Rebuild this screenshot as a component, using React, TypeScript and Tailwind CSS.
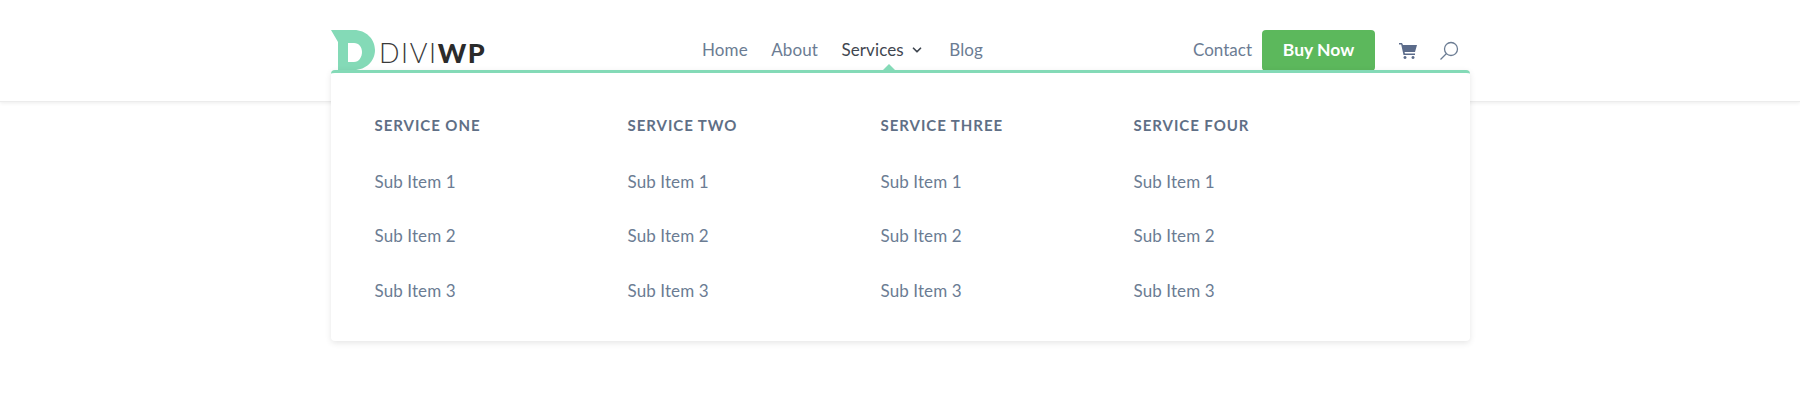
import { ChevronDown } from "lucide-react";

const columns = ["Service One", "Service Two", "Service Three", "Service Four"];
const subItems = ["Sub Item 1", "Sub Item 2", "Sub Item 3"];

function Logo() {
  return (
    <div className="flex w-[371px] shrink-0 items-start">
      <svg width="45" height="40" viewBox="0 0 45 40">
        <path
          fill="#84dab7"
          fillRule="evenodd"
          d="M0 0H23C35 0 44 9 44 20C44 31 35 40 23 40H7V12ZM17 13V32H23C28 32 31 27 31 22C31 17 28 13 23 13Z"
        />
      </svg>
      <div className="ml-[3px] mt-[8px] text-[27px] leading-[30px] tracking-[1.6px] text-[#3a3a3a] font-light">
        DIVI<span className="font-black tracking-[1.6px] text-[#2b2b2b]">WP</span>
      </div>
    </div>
  );
}

function NavLink({ label, active }: { label: string; active?: boolean }) {
  return <a className={active ? "text-[#3f4650]" : "text-[#6b7c93]"}>{label}</a>;
}

export default function App() {
  return (
    <div className="h-[405px] bg-white font-['Lato','Noto_Sans',sans-serif]">
      <header className="h-[102px] border-b border-[#ececec] shadow-[0_1px_4px_rgba(0,0,0,0.08)]">
        <div className="relative ml-[331px] h-full w-[1139px]">
          <div className="flex items-start pt-[30px]">
            <Logo />
            <nav className="mt-[9px] flex items-center text-[17px] leading-[22px] tracking-[0.1px]">
              <NavLink label="Home" />
              <span className="ml-[23.5px]">
                <NavLink label="About" />
              </span>
              <div className="ml-[23.5px] flex items-center gap-[6px]">
                <NavLink label="Services" active />
                <ChevronDown size={14} strokeWidth={3} className="text-[#3f4650]" />
              </div>
              <span className="ml-[25.5px]">
                <NavLink label="Blog" />
              </span>
            </nav>
            <div className="ml-auto flex items-center text-[17px]">
              <a className="mb-[2px] mr-[10px] text-[#6b7c93]">Contact</a>
              <a className="flex h-[41px] w-[113px] items-center justify-center rounded-[4px] bg-[#5cb85c] text-[17.5px] font-bold text-white">
                Buy Now
              </a>
              <svg width="18" height="16" viewBox="0 0 18 16" className="ml-[24px]">
                <path
                  fill="#5b6b8a"
                  d="M0 0H3L4 2H18L16 9H5.5L6 10.5H16V12H4.5L2.2 1.5H0ZM6 13a1.5 1.5 0 1 0 .01 0ZM14 13a1.5 1.5 0 1 0 .01 0Z"
                />
              </svg>
              <svg width="20" height="20" viewBox="0 0 20 20" fill="none" stroke="#6b7c93" strokeWidth="1.3" className="ml-[22px] mr-[11px]">
                <circle cx="12" cy="8" r="6.5" />
                <path d="M7.5 12.5L1.5 18.5" />
              </svg>
            </div>
          </div>

          <div className="absolute left-0 right-0 top-[70px] z-10 h-[271px] rounded-[4px] border-t-[3px] border-[#84dab7] bg-white pl-[43.5px] pt-[40px] shadow-[0_2px_6px_rgba(0,0,0,0.1)]">
            <span className="absolute left-[552px] top-[-9px] h-0 w-0 border-x-[6px] border-b-[6px] border-x-transparent border-b-[#84dab7]" />
            <div className="grid grid-cols-[253px_253px_253px_253px]">
              {columns.map((title) => (
                <div key={title}>
                  <h4 className="h-[24px] text-[15px] leading-[24px] font-bold uppercase tracking-[0.95px] text-[#5f6f86]">
                    {title}
                  </h4>
                  <ul className="mt-[32.6px] flex flex-col gap-[30.5px]">
                    {subItems.map((item) => (
                      <li key={item} className="h-[24px] text-[17px] leading-[24px] tracking-[0.1px] text-[#6b7c93]">
                        {item}
                      </li>
                    ))}
                  </ul>
                </div>
              ))}
            </div>
          </div>
        </div>
      </header>
    </div>
  );
}
